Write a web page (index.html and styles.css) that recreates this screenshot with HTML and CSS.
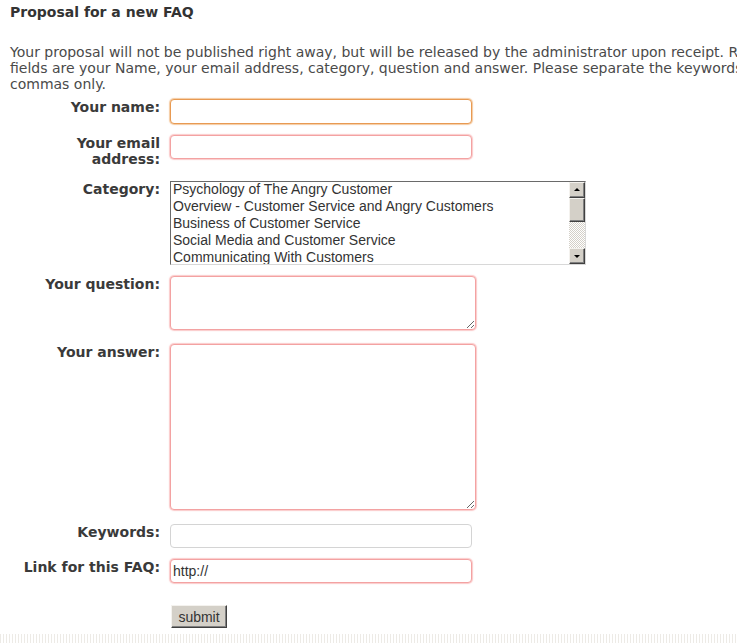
FILE: index.html
```html
<!DOCTYPE html>
<html lang="en">
<head>
<meta charset="utf-8">
<title>Proposal for a new FAQ</title>
<link rel="stylesheet" href="styles.css">
</head>
<body>
<div class="page">
  <h1 class="title">Proposal for a new FAQ</h1>
  <p class="intro">Your proposal will not be published right away, but will be released by the administrator upon receipt. Required fields are your Name, your email address, category, question and answer. Please separate the keywords with commas only.</p>
  <form class="faq-form">
    <label class="lbl" for="name">Your name:</label>
    <div class="field"><input id="name" class="inp inp-focus" type="text"></div>

    <label class="lbl lbl-tall" for="email">Your email address:</label>
    <div class="field"><input id="email" class="inp inp-req" type="text"></div>

    <div class="lbl">Category:</div>
    <div class="field">
      <div class="listbox">
        <div class="options">
          <div class="opt">Psychology of The Angry Customer</div>
          <div class="opt">Overview - Customer Service and Angry Customers</div>
          <div class="opt">Business of Customer Service</div>
          <div class="opt">Social Media and Customer Service</div>
          <div class="opt">Communicating With Customers</div>
        </div>
        <div class="sbar">
          <div class="sbtn"><span class="arr arr-up"></span></div>
          <div class="thumb"></div>
          <div class="track"></div>
          <div class="sbtn"><span class="arr arr-down"></span></div>
        </div>
      </div>
    </div>

    <label class="lbl" for="question">Your question:</label>
    <div class="field"><textarea id="question" class="ta ta-q"></textarea></div>

    <label class="lbl" for="answer">Your answer:</label>
    <div class="field"><textarea id="answer" class="ta ta-a"></textarea></div>

    <label class="lbl" for="keywords">Keywords:</label>
    <div class="field"><input id="keywords" class="inp" type="text"></div>

    <label class="lbl" for="link">Link for this FAQ:</label>
    <div class="field"><input id="link" class="inp inp-req" type="text" value="http://"></div>

    <div class="lbl"></div>
    <div class="field submit-row"><button type="button" class="btn">submit</button></div>
  </form>
  <div class="footer-strip"></div>
</div>
</body>
</html>
```

FILE: styles.css
```css
html, body {
  margin: 0;
  padding: 0;
  background: #fff;
  overflow: hidden;
}

.page {
  width: 815px;
  padding: 4px 0 0 10px;
  font-family: "DejaVu Sans", Verdana, sans-serif;
  font-size: 14px;
  line-height: 16px;
  color: #444;
}

.title {
  margin: 0;
  font-size: 14px;
  line-height: 16px;
  font-weight: bold;
  color: #333;
}

.intro {
  margin: 24px 0 0 0;
  color: #4a4a4a;
}

.faq-form {
  display: grid;
  grid-template-columns: 150px 1fr;
  column-gap: 10px;
  row-gap: 11px;
  margin-top: 7px;
}

.lbl {
  text-align: right;
  font-weight: bold;
  color: #3a3a3a;
  line-height: 16px;
}

.lbl-tall { margin-bottom: 3px; }

.field {
  display: flex;
  align-items: flex-start;
}

.inp {
  box-sizing: border-box;
  width: 302px;
  height: 24px;
  margin: 0;
  padding: 0 2px;
  border: 1px solid #d4d4d4;
  border-radius: 4px;
  background: #fff;
  font-family: "Liberation Sans", Arial, sans-serif;
  font-size: 14px;
  color: #333;
  outline: none;
}

.inp-req {
  border-color: #f3a2a2;
  box-shadow: 0 0 1px 1px rgba(250, 180, 180, 0.7);
}

.inp-focus {
  height: 25px;
  border-color: #e89a52;
  box-shadow: 0 0 1px 1px rgba(240, 180, 120, 0.7);
}

.ta {
  box-sizing: border-box;
  width: 306px;
  margin: 0 0 3px 0;
  padding: 2px;
  border: 1px solid #f3a2a2;
  border-radius: 4px;
  box-shadow: 0 0 1px 1px rgba(250, 180, 180, 0.7);
  background: #fff;
  font-family: "Liberation Sans", Arial, sans-serif;
  font-size: 14px;
  outline: none;
  display: block;
}

.ta-q { height: 54px; }
.ta-a { height: 166px; }

.listbox {
  box-sizing: border-box;
  width: 416px;
  height: 84px;
  display: flex;
  border: 1px solid;
  border-color: #6a6a6a #d8d8d8 #d8d8d8 #6a6a6a;
  background: #fff;
}

.options {
  flex: 1;
  padding: 0 0 0 2px;
  font-family: "Liberation Sans", Arial, sans-serif;
  font-size: 14px;
  line-height: 17px;
  color: #333;
  overflow: hidden;
  white-space: nowrap;
}

.opt:first-child { margin-top: -1px; }

.sbar {
  width: 16px;
  display: flex;
  flex-direction: column;
}

.sbtn, .thumb {
  box-sizing: border-box;
  background: #d4d0c8;
  border: 1px solid;
  border-color: #f4f2ee #404040 #404040 #f4f2ee;
  box-shadow: inset -1px -1px 0 #808080;
}

.sbtn {
  height: 16px;
  display: flex;
  align-items: center;
  justify-content: center;
}

.thumb { height: 24px; }

.track {
  flex: 1;
  background-color: #fff;
  background-image: repeating-conic-gradient(#d4d0c8 0 25%, #fff 0 50%);
  background-size: 2px 2px;
}

.arr {
  width: 0;
  height: 0;
  border-left: 3px solid transparent;
  border-right: 3px solid transparent;
}

.arr-up { border-bottom: 3px solid #000; margin-top: -1px; }
.arr-down { border-top: 3px solid #000; margin-top: 1px; }

.submit-row { padding-top: 11px; }

.btn {
  box-sizing: border-box;
  width: 56px;
  height: 23px;
  margin: 0 0 0 1px;
  padding: 0;
  background: #d4d0c8;
  border: 1px solid;
  border-color: #f4f2ee #404040 #404040 #f4f2ee;
  box-shadow: inset -1px -1px 0 #808080;
  border-radius: 0;
  font-family: "Liberation Sans", Arial, sans-serif;
  font-size: 14px;
  color: #333;
}

.footer-strip {
  margin: 6px 0 0 -10px;
  width: 100%;
  height: 10px;
  background-image:
    repeating-linear-gradient(90deg, rgba(215, 210, 200, 0.45) 0 1px, transparent 1px 3px),
    repeating-linear-gradient(0deg, transparent 0 3px, #fff 3px 5px, transparent 5px 10px);
}
```
